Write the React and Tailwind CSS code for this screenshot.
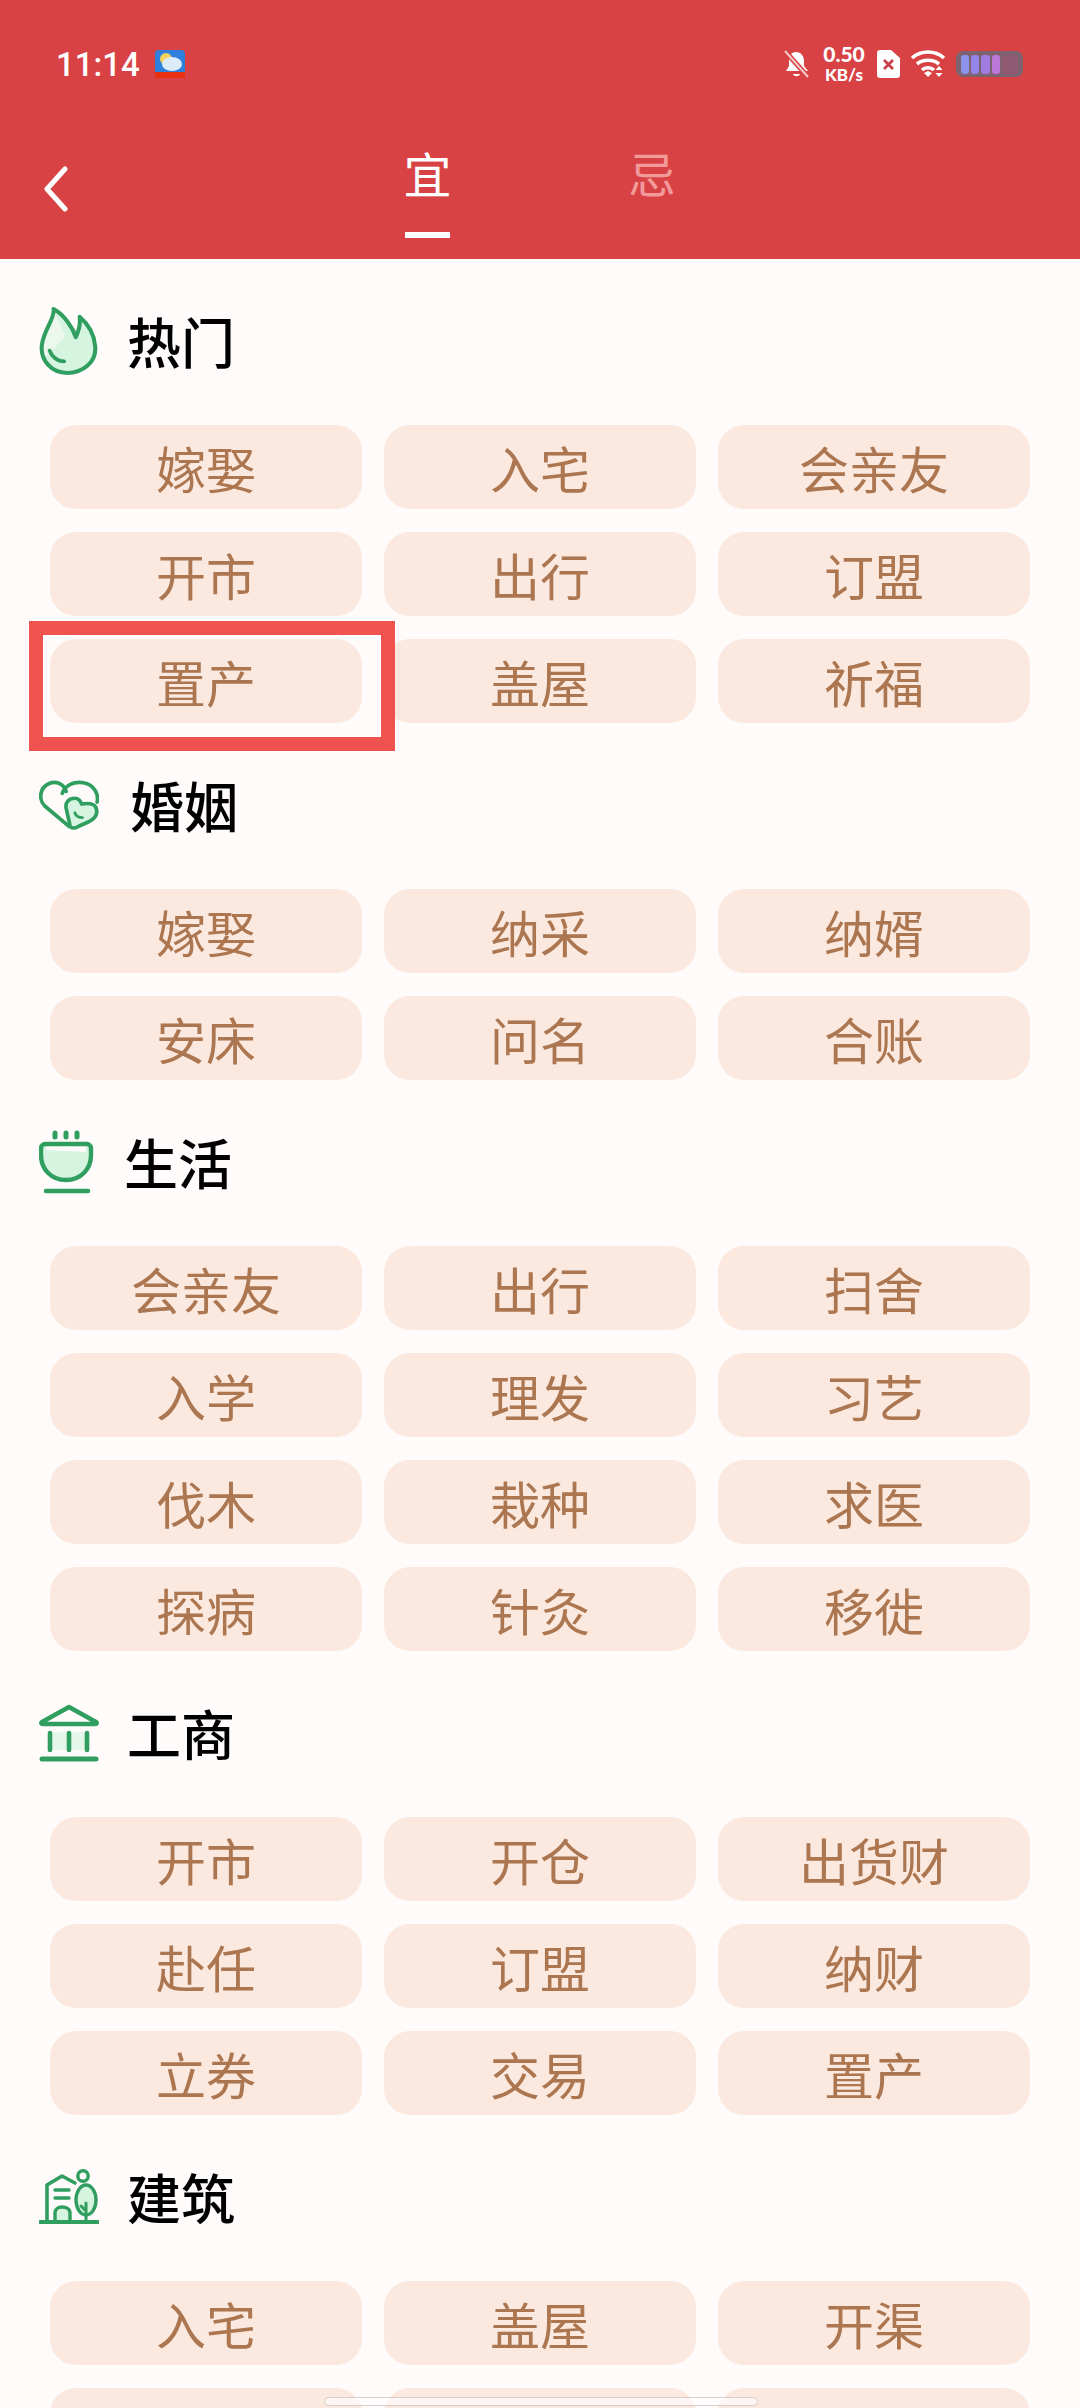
const FONT = 'font-["Noto_Sans_CJK_SC","Noto_Sans",sans-serif]';
const GREEN = '#2f9e5f';
const MINT = '#d6f5e1';

function Fire() {
  return (
    <svg width="62" height="72" viewBox="0 0 62 72" fill="none">
      <path d="M15 3C17 12 5 24 3 40c-2 16 10 29 26 29s31-11 29-28C57 28 50 18 42 11c1 8-1 15-4 21C35 22 26 9 15 3Z" fill={MINT} />
      <path d="M15 3C17 12 5 24 3 40c-1 6 0 10 2 14l22-22Z" fill="#fffafa" opacity=".55" />
      <path d="M15 3C17 12 5 24 3 40c-2 16 10 29 26 29s31-11 29-28C57 28 50 18 42 11c1 8-1 15-4 21C35 22 26 9 15 3Z" stroke={GREEN} strokeWidth="4.2" strokeLinejoin="round" />
      <path d="M11 46c2 6 8 11 15 11" stroke={GREEN} strokeWidth="4" strokeLinecap="round" />
    </svg>
  );
}

function Hearts() {
  return (
    <svg width="62" height="52" viewBox="0 0 62 52" fill="none">
      <path d="M31 48 6 27C-1 20 1 8 10 4c7-3 15-1 18 8" stroke={GREEN} strokeWidth="3.8" strokeLinecap="round" strokeLinejoin="round" />
      <path d="M24 14c3-8 12-13 22-11 11 2 16 12 14 20" stroke={GREEN} strokeWidth="3.8" strokeLinecap="round" />
      <path d="M32 47 28 29c-1-6 3-10 9-10 4 0 6 3 7 6 6-1 13-1 15 4 2 6-1 11-7 14l-11 5c-4 2-8 3-9-1Z" fill={MINT} stroke={GREEN} strokeWidth="3.8" strokeLinejoin="round" />
      <path d="M37 34c1 3 4 5 8 5" stroke={GREEN} strokeWidth="2.8" strokeLinecap="round" />
    </svg>
  );
}

function Bowl() {
  return (
    <svg width="56" height="64" viewBox="0 0 56 64" fill="none">
      <path d="M16 3v4M27 3v4M38 3v4" stroke={GREEN} strokeWidth="5" strokeLinecap="round" />
      <path d="M6 14h42c2 0 4 2 4 4v7c0 14-10 25-25 25S2 39 2 25v-7c0-2 2-4 4-4Z" fill={MINT} />
      <path d="M7 16h40v6L7 20Z" fill="#fffafa" />
      <path d="M6 14h42c2 0 4 2 4 4v7c0 14-10 25-25 25S2 39 2 25v-7c0-2 2-4 4-4Z" stroke={GREEN} strokeWidth="4.4" />
      <path d="M7 61h42" stroke={GREEN} strokeWidth="4.6" strokeLinecap="round" />
    </svg>
  );
}

function Bank() {
  return (
    <svg width="60" height="58" viewBox="0 0 60 58" fill="none">
      <rect x="10" y="28" width="38" height="18" fill="#e4f7ea" />
      <path d="M30 3 3 18c-1 1-1 2 1 2h52c2 0 2-1 1-2Z" stroke={GREEN} strokeWidth="4.6" strokeLinejoin="round" />
      <path d="M11 29v17M30 29v17M48 29v17" stroke={GREEN} strokeWidth="4.6" strokeLinecap="round" />
      <path d="M3 55h54" stroke={GREEN} strokeWidth="5" strokeLinecap="round" />
    </svg>
  );
}

function Building() {
  return (
    <svg width="60" height="56" viewBox="0 0 60 56" fill="none">
      <ellipse cx="47" cy="31" rx="10" ry="15" fill={MINT} stroke={GREEN} strokeWidth="3.4" />
      <circle cx="44" cy="7" r="5.2" stroke={GREEN} strokeWidth="3.4" />
      <path d="M47 34v19M42 37l5 5" stroke={GREEN} strokeWidth="3" strokeLinecap="round" />
      <path d="M8 53V16L23 7l13 7M34 53h2" stroke={GREEN} strokeWidth="3.6" strokeLinecap="round" strokeLinejoin="round" />
      <path d="M16 21h14M16 29h14" stroke={GREEN} strokeWidth="3.4" strokeLinecap="round" />
      <path d="M16 53V44c0-4 3-6 7-6s8 2 8 6v9" fill={MINT} stroke={GREEN} strokeWidth="3.4" />
      <path d="M1 53h58" stroke={GREEN} strokeWidth="4" strokeLinecap="round" />
    </svg>
  );
}

function AppIcon() {
  return (
    <svg width="30" height="28" viewBox="0 0 30 28">
      <rect width="30" height="28" rx="4" fill="#2f7fdc" />
      <circle cx="11" cy="9" r="6" fill="#f4d35e" />
      <ellipse cx="17" cy="14" rx="10" ry="7" fill="#dcecf8" />
      <rect y="22" width="30" height="6" fill="#e8320f" />
    </svg>
  );
}

function BellOff() {
  return (
    <svg width="25" height="28" viewBox="0 0 25 28" fill="none">
      <path d="M12 2c5 0 8 4 8 9v5l4 5H2l3-5v-6c0-5 3-8 7-8Z" fill="white" />
      <path d="M9 24h7c-1 3-6 3-7 0Z" fill="white" />
      <path d="M1 1l23 26" stroke="#d84244" strokeWidth="5" />
      <path d="M1 1l23 26" stroke="#f3c9c9" strokeWidth="2" />
    </svg>
  );
}

function Sim() {
  return (
    <svg width="23" height="28" viewBox="0 0 23 28" fill="none">
      <path d="M3 0h11l9 8v17a3 3 0 0 1-3 3H3a3 3 0 0 1-3-3V3a3 3 0 0 1 3-3Z" fill="white" />
      <path d="M7 10l9 9M16 10l-9 9" stroke="#c9404a" strokeWidth="2.8" />
    </svg>
  );
}

function Wifi() {
  return (
    <svg width="36" height="28" viewBox="0 0 36 28" fill="none">
      <path d="M1 8c9-8 23-8 32 0" stroke="white" strokeWidth="3.6" />
      <path d="M6 14c6-5 16-5 22 0" stroke="white" strokeWidth="3.6" />
      <path d="M11 20c3-3 9-3 12 0" stroke="white" strokeWidth="3.4" />
      <path d="M13 23l4-2 4 2-4 4Z" fill="white" />
      <path d="M28 16l-3.5 4h7ZM28 27l-3.5-4h7Z" fill="white" />
    </svg>
  );
}

function Battery() {
  return (
    <div className="flex h-[26px] w-[67px] items-center gap-[2px] rounded-[7px] bg-[#7d6270] px-[5px]">
      <div className="h-[19px] w-[9px] rounded-[3px] bg-[#8d93e8]" />
      <div className="h-[19px] w-[9px] rounded-[3px] bg-[#9385ea]" />
      <div className="h-[19px] w-[9px] rounded-[3px] bg-[#a07ce0]" />
      <div className="h-[19px] w-[9px] rounded-[3px] bg-[#bc78d8]" />
      <div className="h-[19px] w-[18px] rounded-[3px] bg-[#8f5a72]" />
    </div>
  );
}

function Chip({ label, marked }) {
  return (
    <div className={`relative flex h-[84px] items-center justify-center rounded-[26px] bg-[#fbe9e0] pb-[1px] text-[50px] leading-none text-[#ab7650] ${FONT}`}>
      {label}
      {marked && <div className="absolute -top-[18px] -right-[33px] -bottom-[28px] -left-[21px] z-10 border-[14px] border-[#ee5350]" />}
    </div>
  );
}

function Section({ icon, title, titleClass, items, marked }) {
  return (
    <section>
      <div className="flex h-[166px] items-center pb-[2px] pl-[39px]">
        <div className="flex w-[60px] shrink-0 items-center justify-start">{icon}</div>
        <h2 className={`text-[54px] leading-none font-medium text-black ${titleClass} ${FONT}`}>{title}</h2>
      </div>
      <div className="grid grid-cols-[312px_312px_312px] gap-x-[22px] gap-y-[23px] pl-[50px]">
        {items.map((label, i) => (
          <Chip key={i} label={label} marked={marked === i} />
        ))}
      </div>
    </section>
  );
}

const sections = [
  { icon: <Fire />, title: '热门', titleClass: 'ml-[28px]', marked: 6, items: ['嫁娶', '入宅', '会亲友', '开市', '出行', '订盟', '置产', '盖屋', '祈福'] },
  { icon: <Hearts />, title: '婚姻', titleClass: 'ml-[31px]', items: ['嫁娶', '纳采', '纳婿', '安床', '问名', '合账'] },
  { icon: <Bowl />, title: '生活', titleClass: 'ml-[25px]', items: ['会亲友', '出行', '扫舍', '入学', '理发', '习艺', '伐木', '栽种', '求医', '探病', '针灸', '移徙'] },
  { icon: <Bank />, title: '工商', titleClass: 'ml-[28px]', items: ['开市', '开仓', '出货财', '赴任', '订盟', '纳财', '立券', '交易', '置产'] },
  { icon: <Building />, title: '建筑', titleClass: 'ml-[28px]', items: ['入宅', '盖屋', '开渠', '', '', ''] },
];

export default function App() {
  return (
    <div className="relative h-[2408px] w-[1080px] overflow-hidden bg-[#fffbfb]">
      <header className="h-[259px] bg-[#d84244] text-white">
        <div className="flex h-[128px] items-center justify-between pr-[57px] pl-[56px]">
          <div className="flex items-center gap-[15px]">
            <span className='font-["Roboto",sans-serif] text-[33px] leading-none font-medium'>11:14</span>
            <AppIcon />
          </div>
          <div className="flex items-center">
            <BellOff />
            <div className='ml-[12px] flex w-[46px] flex-col items-center font-["Lato",sans-serif] font-black'>
              <span className="text-[21px] leading-[21px]">0.50</span>
              <span className="text-[17px] leading-[21px]">KB/s</span>
            </div>
            <div className="ml-[10px]"><Sim /></div>
            <div className="ml-[11px]"><Wifi /></div>
            <div className="ml-[9px]"><Battery /></div>
          </div>
        </div>
        <div className="flex items-start pl-[43px]">
          <svg className="mt-[38px] shrink-0" width="26" height="46" viewBox="0 0 26 46" fill="none">
            <path d="M22 3 4 23l18 20" stroke="white" strokeWidth="5" strokeLinecap="round" strokeLinejoin="round" />
          </svg>
          <div className={`ml-[336px] flex text-[48px] leading-none ${FONT}`}>
            <div className="flex w-[45px] flex-col items-center pt-[20px]">
              <span>宜</span>
              <div className="mt-[36px] h-[6px] w-[45px] bg-white" />
            </div>
            <div className="ml-[178px] pt-[20px] text-[#f29a9a]">忌</div>
          </div>
        </div>
      </header>
      {sections.map((s) => (
        <Section key={s.title} {...s} />
      ))}
      <div className="absolute top-[2397px] left-[324px] h-[9px] w-[434px] rounded-full border border-[#d8cdc8] bg-white/60" />
    </div>
  );
}
